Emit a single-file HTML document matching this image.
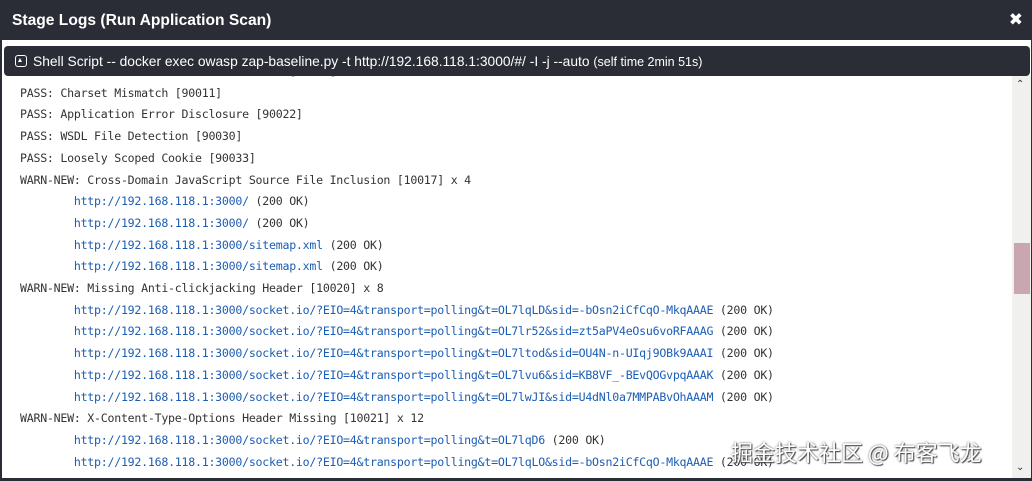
<!DOCTYPE html>
<html><head><meta charset="utf-8"><style>
*{margin:0;padding:0;box-sizing:border-box}
html,body{width:1032px;height:481px;overflow:hidden;background:#fff}
.frame{position:absolute;left:0;top:0;width:1032px;height:481px;border-left:2px solid #2a2d35;border-bottom:3px solid #2a2d35;border-right:1px solid #2a2d35}
.hdr{position:absolute;left:0;top:0;width:1032px;height:40px;background:#2a2d35;color:#fff;font:bold 15.6px "Liberation Sans",sans-serif;line-height:42px;padding-left:12px}
.x{position:absolute;right:9px;top:0;font:bold 17px "DejaVu Sans",sans-serif;line-height:40px}
.bar{position:absolute;left:4px;top:46px;width:1026px;height:30px;background:#2a2d35;border-radius:4px;color:#fff;font:13.8px "Liberation Sans",sans-serif;line-height:31px;padding-left:11px;z-index:2;white-space:nowrap}
.ico{display:inline-block;width:12px;height:12px;border:1.6px solid #fff;border-radius:3px;vertical-align:-1px;margin-right:6px;position:relative}
.ico:after{content:"";position:absolute;left:2px;top:2px;border-left:2.5px solid transparent;border-right:2.5px solid transparent;border-bottom:4px solid #fff}
.log{position:absolute;left:20px;top:61px;font:11.6px "DejaVu Sans Mono",monospace;letter-spacing:-0.25px;color:#333;line-height:21.7px;white-space:pre}
a{color:#1c5db5;text-decoration:none}
.sb{position:absolute;left:1012px;top:76px;width:19px;height:402px;background:#f0f0ee}
.th{position:absolute;left:1014px;top:243px;width:16px;height:51px;background:#c9a6b0}
.wm{position:absolute;left:731px;top:436px;font:22px "Noto Sans CJK SC",sans-serif;color:#fff;text-shadow:0 0 2px #555,1px 1px 1px #444}
.arr{position:absolute;left:1016px;font:10px "DejaVu Sans",sans-serif;color:#333}
</style></head><body>
<div class="log">PASS: Cookie Without SameSite Attribute [10054]
PASS: Charset Mismatch [90011]
PASS: Application Error Disclosure [90022]
PASS: WSDL File Detection [90030]
PASS: Loosely Scoped Cookie [90033]
WARN-NEW: Cross-Domain JavaScript Source File Inclusion [10017] x 4
        <a>http://192.168.118.1:3000/</a> (200 OK)
        <a>http://192.168.118.1:3000/</a> (200 OK)
        <a>http://192.168.118.1:3000/sitemap.xml</a> (200 OK)
        <a>http://192.168.118.1:3000/sitemap.xml</a> (200 OK)
WARN-NEW: Missing Anti-clickjacking Header [10020] x 8
        <a>http://192.168.118.1:3000/socket.io/?EIO=4&amp;transport=polling&amp;t=OL7lqLD&amp;sid=-bOsn2iCfCqO-MkqAAAE</a> (200 OK)
        <a>http://192.168.118.1:3000/socket.io/?EIO=4&amp;transport=polling&amp;t=OL7lr52&amp;sid=zt5aPV4eOsu6voRFAAAG</a> (200 OK)
        <a>http://192.168.118.1:3000/socket.io/?EIO=4&amp;transport=polling&amp;t=OL7ltod&amp;sid=OU4N-n-UIqj9OBk9AAAI</a> (200 OK)
        <a>http://192.168.118.1:3000/socket.io/?EIO=4&amp;transport=polling&amp;t=OL7lvu6&amp;sid=KB8VF_-BEvQOGvpqAAAK</a> (200 OK)
        <a>http://192.168.118.1:3000/socket.io/?EIO=4&amp;transport=polling&amp;t=OL7lwJI&amp;sid=U4dNl0a7MMPABvOhAAAM</a> (200 OK)
WARN-NEW: X-Content-Type-Options Header Missing [10021] x 12
        <a>http://192.168.118.1:3000/socket.io/?EIO=4&amp;transport=polling&amp;t=OL7lqD6</a> (200 OK)
        <a>http://192.168.118.1:3000/socket.io/?EIO=4&amp;transport=polling&amp;t=OL7lqLO&amp;sid=-bOsn2iCfCqO-MkqAAAE</a> (200 OK)</div>
<div class="sb"></div><div class="th"></div>
<div class="arr" style="top:79px">&#8963;</div>
<div class="arr" style="top:462px">&#8964;</div>
<div class="hdr">Stage Logs (Run Application Scan)<span class="x">✖</span></div>
<div class="bar"><span class="ico"></span>Shell Script -- docker exec owasp zap-baseline.py -t http://192.168.118.1:3000/#/ -I -j --auto <span style="font-size:12.5px">(self time 2min 51s)</span></div>
<div class="wm">掘金技术社区 @ 布客飞龙</div>
<div class="frame"></div>
</body></html>
